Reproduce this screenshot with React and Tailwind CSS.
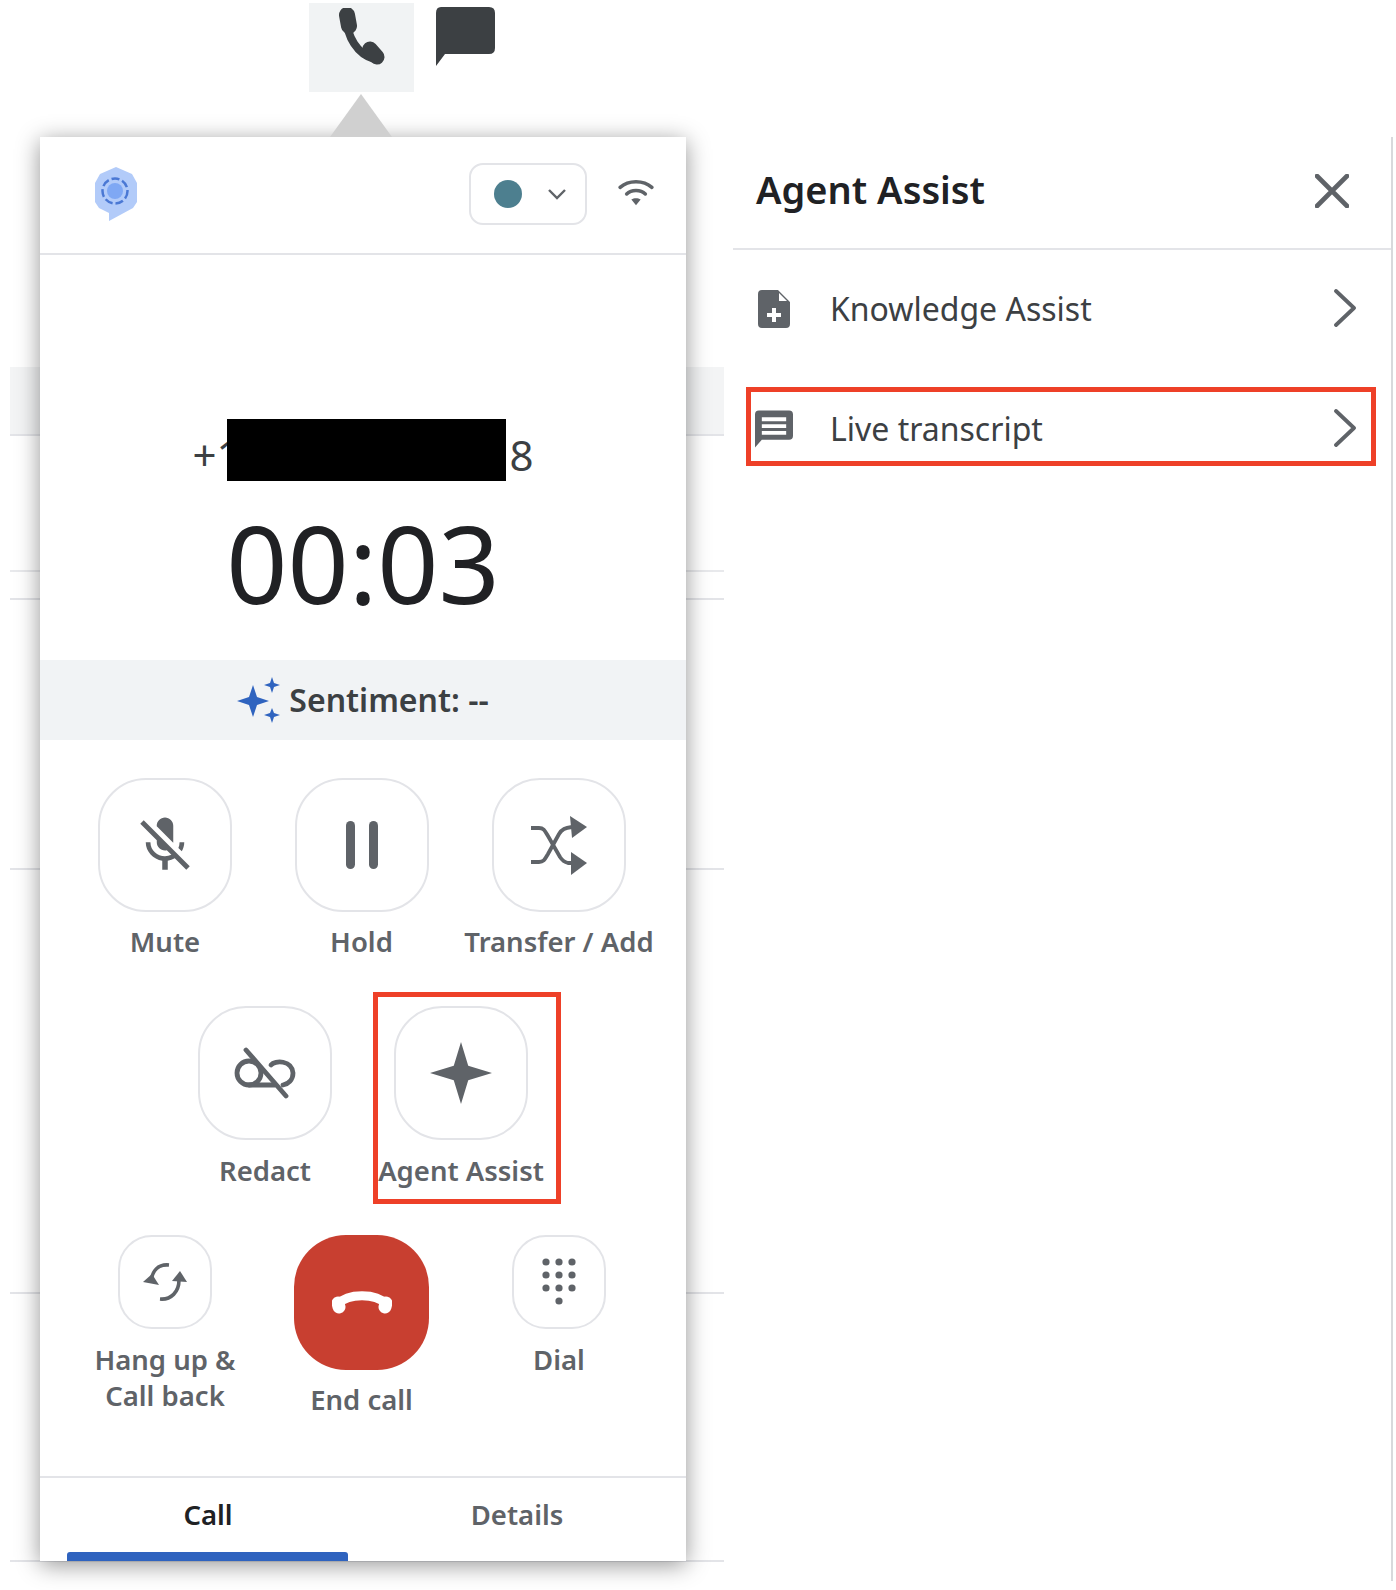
const ink = "#5f6368";

function PhoneIcon() {
  return (
    <svg width="48" height="60" viewBox="0 0 48 60" fill="none" stroke="#3c4043" strokeLinecap="round">
      <path d="M9 12C9 28 19 46 36 51" strokeWidth="8" />
      <path d="M9 7L11 18" strokeWidth="16" />
      <path d="M32 41L39 49" strokeWidth="15" />
    </svg>
  );
}

function ChatIcon() {
  return (
    <svg width="60" height="60" viewBox="0 0 60 60" fill="#3c4043">
      <path d="M6 0H54Q60 0 60 6V41Q60 47 54 47H10L1 59V6Q1 0 6 0Z" />
    </svg>
  );
}

function Logo() {
  return (
    <svg width="42" height="54" viewBox="0 0 42 54">
      <path d="M21 0L37 7L42 16V35L38 41L14 54V46L4 41L0 35V16L5 7Z" fill="#b2cbf9" />
      <circle cx="20" cy="24" r="12.5" fill="none" stroke="#4a78d4" strokeWidth="2.5" strokeDasharray="8 3" />
      <circle cx="20" cy="24" r="8" fill="#7fa8f4" />
    </svg>
  );
}

function WifiIcon() {
  return (
    <svg width="36" height="28" viewBox="0 0 38 30" fill="none" stroke={ink} strokeWidth="3.8" strokeLinecap="round">
      <path d="M2 9C11 1 27 1 36 9" />
      <path d="M9 16C14 11 24 11 29 16" />
      <path d="M19 28L14 22C17 20 21 20 24 22Z" fill={ink} stroke="none" />
    </svg>
  );
}

function SparkleCluster() {
  return (
    <svg width="44" height="46" viewBox="0 0 44 46" fill="#2f63bf">
      <path d="M16 8L20 20L32 24L20 28L16 40L12 28L0 24L12 20Z" />
      <path d="M35 0L37 6L43 8L37 10L35 16L33 10L27 8L33 6Z" />
      <path d="M35 31L37 36L43 38L37 40L35 46L33 40L27 38L33 36Z" />
    </svg>
  );
}

function MuteIcon() {
  return (
    <svg width="66" height="66" viewBox="0 0 24 24" fill={ink}>
      <path d="M19 11h-1.7c0 .74-.16 1.43-.43 2.05l1.23 1.23c.56-.98.9-2.09.9-3.28zm-4.02.17c0-.06.02-.11.02-.17V5c0-1.66-1.34-3-3-3S9 3.34 9 5v.18l5.98 5.99zM4.27 3L3 4.27l6.01 6.01V11c0 1.66 1.33 3 2.99 3 .22 0 .44-.03.65-.08l1.66 1.66c-.71.33-1.5.52-2.31.52-2.76 0-5.3-2.1-5.3-5.1H5c0 3.41 2.72 6.23 6 6.72V21h2v-3.28c.91-.13 1.77-.45 2.54-.9L19.73 21 21 19.73 4.27 3z" />
    </svg>
  );
}

function PauseIcon() {
  return (
    <svg width="34" height="50" viewBox="0 0 34 50" fill={ink}>
      <rect x="1" y="1" width="9" height="48" rx="4.5" />
      <rect x="24" y="1" width="9" height="48" rx="4.5" />
    </svg>
  );
}

function TransferIcon() {
  return (
    <svg width="58" height="60" viewBox="0 0 58 60" fill="none" stroke={ink} strokeWidth="3.8">
      <path d="M1 13H9C14 13 15 16 18 21L30 42C32 45 34 47 38 48H42" />
      <path d="M1 47H9C14 47 15 44 18 39L29 19C32 14 35 13 42 12" />
      <path d="M40 1L57 12L42 23Z" fill={ink} stroke="none" />
      <path d="M41 37L57 48L41 60Z" fill={ink} stroke="none" />
    </svg>
  );
}

function RedactIcon() {
  return (
    <svg width="62" height="62" viewBox="0 0 62 62" fill="none" stroke={ink} strokeWidth="4.8" strokeLinecap="round">
      <circle cx="15" cy="31" r="12" />
      <path d="M15 43H41" />
      <path d="M37 23C41 18 58 18 59 31C59 38 54 42 49 43" />
      <path d="M12 8L52 54" />
    </svg>
  );
}

function StarIcon({ size }) {
  return (
    <svg width={size} height={size} viewBox="0 0 60 60" fill={ink}>
      <path d="M30 0L37 23L60 30L37 37L30 60L23 37L0 30L23 23Z" />
    </svg>
  );
}

function CallbackIcon() {
  return (
    <svg width="44" height="40" viewBox="0 0 44 40" fill="none" stroke={ink} strokeWidth="3.6">
      <path d="M8 20C9 9 15 2 26 3" />
      <path d="M36 18C36 30 28 38 17 37" />
      <path d="M0 20L9 12L16 23Z" fill={ink} stroke="none" />
      <path d="M29 19L37 9L44 20Z" fill={ink} stroke="none" />
    </svg>
  );
}

function DialIcon() {
  const dots = [];
  [4, 17, 30].forEach((y) => [4, 17, 30].forEach((x) => dots.push([x, y])));
  dots.push([17, 43]);
  return (
    <svg width="34" height="48" viewBox="0 0 34 48" fill={ink}>
      {dots.map(([x, y]) => (
        <circle key={`${x}-${y}`} cx={x} cy={y} r="3.6" />
      ))}
    </svg>
  );
}

function EndCallIcon() {
  return (
    <svg className="mb-[3px]" width="60" height="26" viewBox="0 0 60 26" fill="none" stroke="#ffffff" strokeLinecap="round">
      <path d="M6 16C16 5 44 5 54 16" strokeWidth="9" />
      <path d="M6 15L7 19" strokeWidth="13" />
      <path d="M54 15L53 19" strokeWidth="13" />
    </svg>
  );
}

function DocPlusIcon() {
  return (
    <svg width="32" height="38" viewBox="0 0 32 38" fill={ink}>
      <path
        fillRule="evenodd"
        d="M4 0H20L32 12V34Q32 38 28 38H4Q0 38 0 34V4Q0 0 4 0ZM21 3V11H29ZM14 18V23H9V27H14V32H18V27H23V23H18V18Z"
      />
    </svg>
  );
}

function TranscriptIcon() {
  return (
    <svg width="38" height="38" viewBox="0 0 39 38" fill={ink}>
      <path
        fillRule="evenodd"
        d="M4 0H35Q39 0 39 4V26Q39 30 35 30H7L0 38V4Q0 0 4 0ZM7 7V11H32V7ZM7 14V18H32V14ZM7 21V25H32V21Z"
      />
    </svg>
  );
}

function Chevron() {
  return (
    <svg className="mb-[3px]" width="24" height="38" viewBox="0 0 24 38" fill="none" stroke={ink} strokeWidth="3.8" strokeLinecap="round" strokeLinejoin="round">
      <path d="M3 2L21 19L3 36" />
    </svg>
  );
}

function CloseIcon() {
  return (
    <svg width="34" height="34" viewBox="0 0 34 34" fill="none" stroke={ink} strokeWidth="4.6" strokeLinecap="round">
      <path d="M2 2L32 32M32 2L2 32" />
    </svg>
  );
}

function ActionButton({ icon, label, boxed, gap }) {
  return (
    <div className="relative flex flex-col items-center">
      {boxed && (
        <div className="absolute top-[-14px] left-[10px] h-[212px] w-[188px] border-[5px] border-[#ee4028]" />
      )}
      <div className="flex h-[134px] w-[134px] items-center justify-center rounded-[48px] border-2 border-[#e3e4e8]">
        {icon}
      </div>
      <div className={`${gap} text-center text-[27.5px] leading-[36px] font-semibold whitespace-nowrap text-[#5f6368]`}>
        {label}
      </div>
    </div>
  );
}

function SmallButton({ icon, label }) {
  return (
    <div className="flex flex-col items-center">
      <div className="flex h-[94px] w-[94px] items-center justify-center rounded-[34px] border-2 border-[#e3e4e8]">
        {icon}
      </div>
      <div className="mt-[13px] text-center text-[27.5px] leading-[36px] font-semibold text-[#5f6368]">
        {label}
      </div>
    </div>
  );
}

function MenuRow({ icon, label, iconClass }) {
  return (
    <div className="flex h-[78px] items-center pr-[34px] pl-[25px]">
      <div className={`flex shrink-0 ${iconClass}`}>{icon}</div>
      <div className="flex-1 text-[32px] leading-[44px] text-[#3c4043]">{label}</div>
      <Chevron />
    </div>
  );
}

export default function App() {
  return (
    <div className="relative h-[1590px] w-[1396px] overflow-hidden bg-white font-['Noto_Sans',sans-serif]">
      {/* table rows that show through behind the softphone */}
      <div className="absolute top-[367px] left-[10px] flex w-[714px] flex-col">
        <div className="h-[69px] border-b-2 border-[#e3e4e8] bg-[#f3f4f5]" />
        <div className="h-[136px] border-b-2 border-[#e8e9ec]" />
        <div className="h-[28px] border-b-2 border-[#e3e4e8]" />
        <div className="h-[270px] border-b-2 border-[#e3e4e8]" />
        <div className="h-[424px] border-b-2 border-[#e3e4e8]" />
        <div className="h-[268px] border-b-2 border-[#e3e4e8]" />
      </div>

      <div className="relative flex h-[92px] items-start pt-[3px] pl-[309px]">
        <div className="flex h-[89px] w-[105px] justify-center bg-[#f1f3f4] pt-[5px]">
          <PhoneIcon />
        </div>
        <div className="ml-[21px] pt-[4px]">
          <ChatIcon />
        </div>
      </div>

      <div className="relative flex items-start pt-[45px] pl-[40px]">
        <svg className="absolute top-[2px] left-[330px]" width="62" height="43" viewBox="0 0 62 43" fill="#d0d0d0">
          <path d="M31 0L62 43H0Z" />
        </svg>

        <div className="flex h-[1424px] w-[646px] flex-col bg-white shadow-[0_4px_22px_rgba(0,0,0,0.42)]">
          <div className="flex h-[118px] shrink-0 items-center border-b-2 border-[#e3e4e8] pr-[32px] pb-[2px] pl-[55px]">
            <Logo />
            <div className="ml-auto flex h-[62px] w-[118px] items-center rounded-[14px] border-2 border-[#e3e4e8] pl-[23px]">
              <div className="h-[28px] w-[28px] rounded-full bg-[#4d7f8f]" />
              <svg className="ml-[25px]" width="20" height="12" viewBox="0 0 20 12" fill="none" stroke={ink} strokeWidth="2.4">
                <path d="M2 2L10 10L18 2" />
              </svg>
            </div>
            <div className="ml-[31px] pb-[2px]">
              <WifiIcon />
            </div>
          </div>

          <div className="flex h-[405px] shrink-0 flex-col items-center pt-[169px]">
            <div className="flex h-[62px] items-center text-[42px] leading-none text-[#3c4043]">
              <span>+1</span>
              <span className="relative -top-[5px] mr-[4px] ml-[-14px] h-[62px] w-[279px] bg-black" />
              <span>8</span>
            </div>
            <div className="mt-[5px] text-[107px] leading-[144px] text-[#202124]">00:03</div>
          </div>

          <div className="flex h-[80px] shrink-0 items-center justify-center bg-[#f1f3f5]">
            <SparkleCluster />
            <div className="ml-[8px] text-[32px] leading-[40px] font-semibold text-[#3c4043]">Sentiment: --</div>
          </div>

          <div className="flex flex-1 flex-col pt-[38px]">
            <div className="grid grid-cols-[196px_197px_198px] pl-[27px]">
              <ActionButton icon={<MuteIcon />} label="Mute" gap="mt-[12px]" />
              <ActionButton icon={<PauseIcon />} label="Hold" gap="mt-[12px]" />
              <ActionButton icon={<TransferIcon />} label="Transfer / Add" gap="mt-[12px]" />
            </div>
            <div className="mt-[46px] grid grid-cols-[196px_196px] justify-center">
              <ActionButton icon={<RedactIcon />} label="Redact" gap="mt-[13px]" />
              <ActionButton icon={<StarIcon size={62} />} label="Agent Assist" gap="mt-[13px]" boxed />
            </div>
            <div className="mt-[46px] grid grid-cols-[196px_197px_198px] pl-[27px]">
              <SmallButton icon={<CallbackIcon />} label={<>Hang up &<br />Call back</>} />
              <div className="flex flex-col items-center">
                <div className="flex h-[135px] w-[135px] items-center justify-center rounded-[52px] bg-[#c83f30]">
                  <EndCallIcon />
                </div>
                <div className="mt-[12px] text-[27.5px] leading-[36px] font-semibold text-[#5f6368]">End call</div>
              </div>
              <SmallButton icon={<DialIcon />} label="Dial" />
            </div>
          </div>

          <div className="relative flex h-[85px] shrink-0 border-t-2 border-[#e3e4e8] pt-[19px]">
            <div className="w-[336px] text-center text-[27.5px] leading-[36px] font-semibold text-[#202124]">Call</div>
            <div className="w-[282px] text-center text-[27.5px] leading-[36px] font-semibold text-[#5f6368]">Details</div>
            <div className="absolute bottom-0 left-[27px] h-[9px] w-[281px] rounded-t-[3px] bg-[#2f63bf]" />
          </div>
        </div>

        <div className="ml-[47px] flex h-[1444px] w-[660px] flex-col border-r-2 border-[#d8d9dc]">
          <div className="flex h-[113px] items-center justify-between border-b-2 border-[#e3e4e8] pr-[42px] pb-[4px] pl-[23px]">
            <div className="mb-[4px] text-[38px] leading-[48px] font-semibold text-[#202124]">Agent Assist</div>
            <CloseIcon />
          </div>
          <div className="mt-[20px] flex flex-col gap-[42px]">
            <MenuRow icon={<DocPlusIcon />} label="Knowledge Assist" iconClass="w-[72px]" />
            <div className="relative">
              <div className="absolute top-[-3px] left-[13px] h-[79px] w-[630px] border-[5px] border-[#ee4028]" />
              <MenuRow icon={<TranscriptIcon />} label="Live transcript" iconClass="-ml-[3px] w-[75px]" />
            </div>
          </div>
        </div>
      </div>
    </div>
  );
}
